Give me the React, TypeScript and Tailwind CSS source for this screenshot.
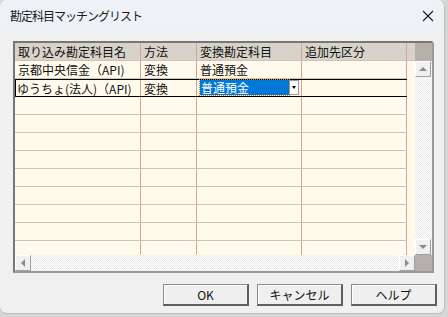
import React from 'react';

const FONT = "font-['Noto_Sans_CJK_JP','Liberation_Sans',sans-serif]";

const columns = [
  { label: '取り込み勘定科目名', width: 'w-[126px]' },
  { label: '方法', width: 'w-[56px]' },
  { label: '変換勘定科目', width: 'w-[105px]' },
  { label: '追加先区分', width: 'w-[105px]' },
];

const rows: string[][] = [
  ['京都中央信金（API)', '変換', '普通預金', ''],
  ['ゆうちょ(法人)（API)', '変換', '普通預金', ''],
];

const EMPTY_ROWS = 9;

const checker = 'bg-[repeating-conic-gradient(#ffffff_0%_25%,#e9e9e9_0%_50%)] bg-[length:2px_2px]';

const ScrollButton: React.FC<{ dir: 'up' | 'down' | 'left' | 'right' }> = ({ dir }) => {
  const tri = {
    up: 'border-l-[4px] border-r-[4px] border-b-[4px] border-l-transparent border-r-transparent border-b-[#8c8c8c]',
    down: 'border-l-[4px] border-r-[4px] border-t-[4px] border-l-transparent border-r-transparent border-t-[#8c8c8c]',
    left: 'border-t-[4px] border-b-[4px] border-r-[4px] border-t-transparent border-b-transparent border-r-[#8c8c8c]',
    right: 'border-t-[4px] border-b-[4px] border-l-[4px] border-t-transparent border-b-transparent border-l-[#8c8c8c]',
  }[dir];
  return (
    <div className="w-[16px] h-[16px] shrink-0 bg-[#f0f0f0] border-t border-l border-t-[#ffffff] border-l-[#ffffff] border-b border-r border-b-[#a0a0a0] border-r-[#a0a0a0] flex items-center justify-center">
      <div className={`w-0 h-0 ${tri}`} />
    </div>
  );
};

const DialogButton: React.FC<{ label: string }> = ({ label }) => (
  <button className="w-[86px] h-[22px] bg-[#efefef] border border-[#8a8a8a] border-b-2 border-r-2 border-b-[#5f5f5f] border-r-[#5f5f5f] shadow-[inset_1px_1px_0_#ffffff] text-[12px] text-[#111] leading-none flex items-center justify-center">
    {label}
  </button>
);

const App: React.FC = () => {
  return (
    <div className={`w-[448px] h-[317px] bg-[#d6d6d6] ${FONT}`}>
      <div className="w-[445px] h-[314px] bg-[#f0f0f0] rounded-[7px] overflow-hidden flex flex-col border-r border-b border-[#bdbdbd]">
        {/* title bar */}
        <div className="h-[31px] shrink-0 bg-[#eef2f6] flex items-center justify-between pl-[10px] pr-[8px]">
          <span className="text-[12px] text-[#1b1b1b] tracking-[-1px]">勘定科目マッチングリスト</span>
          <svg width="14" height="14" viewBox="0 0 14 14" className="mr-[1px]">
            <path d="M2 2 L12 12 M12 2 L2 12" stroke="#1b1b1b" strokeWidth="1.1" />
          </svg>
        </div>

        {/* grid */}
        <div className="pl-[13px] pt-[10px]">
          <div className="w-[421px] h-[232px] border-l-2 border-t-2 border-l-[#777] border-t-[#777] border-r-2 border-b-2 border-r-[#9a9a9a] border-b-[#9a9a9a] rounded-tr-[3px] flex flex-col overflow-hidden">
            <div className="flex h-[212px]">
              {/* table */}
              <div className="w-[401px] bg-[#fffaec] flex flex-col overflow-hidden">
                <div className="flex h-[18px] shrink-0 bg-[#d8d3ca] border-b border-[#c9c4b8]">
                  {columns.map((c) => (
                    <div key={c.label} className={`${c.width} shrink-0 border-r border-[#d8a294] pl-[3px] text-[12px] leading-[17px] text-[#111]`}>
                      {c.label}
                    </div>
                  ))}
                </div>
                {rows.map((r, i) => {
                  const selected = i === 1;
                  return (
                    <div
                      key={i}
                      className={`flex h-[18px] shrink-0 w-[392px] ${selected ? 'border border-black' : 'border-b border-[#c9c4b8]'}`}
                    >
                      {r.map((cell, j) => (
                        <div
                          key={j}
                          className={`${columns[j].width} shrink-0 border-r border-[#d8a294] text-[12px] leading-[17px] text-[#111] ${selected && j === 0 ? 'pl-[2px] -ml-px' : 'pl-[3px]'}`}
                        >
                          {selected && j === 2 ? (
                            <div className="flex h-[15px] pr-[2px] items-start">
                              <div className="flex-1 h-[15px] bg-[#0078d7] text-white leading-[15px] pl-[1px] outline-1 outline-dotted outline-[#e07a1f]">
                                {cell}
                              </div>
                              <div className="w-[10px] h-[15px] bg-white border border-[#9a9a9a] flex items-center justify-center">
                                <div className="w-0 h-0 border-l-[2px] border-r-[2px] border-t-[3px] border-l-transparent border-r-transparent border-t-black" />
                              </div>
                            </div>
                          ) : (
                            cell
                          )}
                        </div>
                      ))}
                    </div>
                  );
                })}
                {Array.from({ length: EMPTY_ROWS }).map((_, i) => (
                  <div key={i} className="flex h-[18px] shrink-0 w-[392px] border-b border-[#c9c4b8]">
                    {columns.map((c) => (
                      <div key={c.label} className={`${c.width} shrink-0 border-r border-[#d8a294]`} />
                    ))}
                  </div>
                ))}
              </div>
              {/* vertical scrollbar */}
              <div className="w-[17px] flex flex-col">
                <div className="h-[18px] bg-[#b5b1aa] shrink-0" />
                <div className={`flex-1 flex flex-col justify-between ${checker}`}>
                  <ScrollButton dir="up" />
                  <ScrollButton dir="down" />
                </div>
              </div>
            </div>
            {/* horizontal scrollbar */}
            <div className="flex h-[17px]">
              <div className={`w-[401px] flex justify-between ${checker}`}>
                <ScrollButton dir="left" />
                <ScrollButton dir="right" />
              </div>
              <div className="w-[17px] bg-[#b5b1aa]" />
            </div>
          </div>
        </div>

        {/* buttons */}
        <div className="flex gap-[8px] pl-[163px] pt-[11px]">
          <DialogButton label="OK" />
          <DialogButton label="キャンセル" />
          <DialogButton label="ヘルプ" />
        </div>
      </div>
    </div>
  );
};

export default App;
